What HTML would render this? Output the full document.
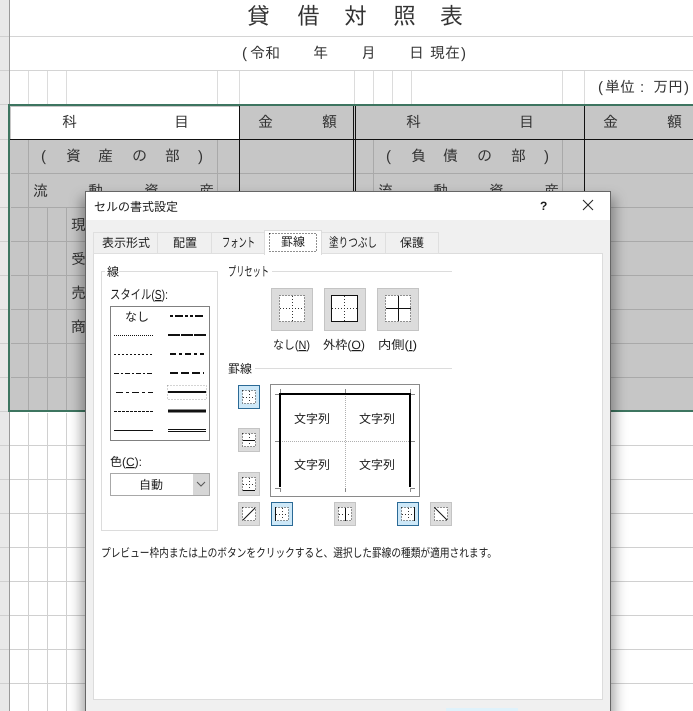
<!DOCTYPE html>
<html lang="ja"><head><meta charset="utf-8"><style>
html,body{margin:0;padding:0;background:#fff;width:693px;height:711px;overflow:hidden}
svg{display:block}
.s{font-family:"Liberation Sans","IPAGothic","Noto Sans CJK JP",sans-serif;fill:#333}
.d{font-family:"Liberation Sans","Noto Sans CJK JP",sans-serif;fill:#1c1c1c;font-weight:400}
</style></head><body>
<svg width="693" height="711" viewBox="0 0 693 711" xmlns="http://www.w3.org/2000/svg" shape-rendering="crispEdges">
<defs>
<filter id="blur" x="-10%" y="-10%" width="120%" height="120%"><feGaussianBlur stdDeviation="6"/></filter>
</defs>
<rect x="0" y="0" width="9" height="711" fill="#e8e8e8"/>
<g stroke="#cfcfcf"><path d="M0 36.500H9M0 70.500H9M0 104.500H9M0 139.500H9M0 173.500H9M0 207.500H9M0 241.500H9M0 275.500H9M0 309.500H9M0 343.500H9M0 377.500H9M0 411.500H9M0 445.500H9M0 479.500H9M0 513.500H9M0 547.500H9M0 581.500H9M0 615.500H9M0 649.500H9M0 683.500H9"/></g>
<rect x="9" y="0" width="1" height="711" fill="#999"/>
<!-- upper grid -->
<path d="M10 36.500H693M10 70.500H693" stroke="#d4d4d4"/>
<path d="M28.500 71V105M47.500 71V105M66.500 71V105M217.500 71V105M239.500 71V105M354.500 71V105M373.500 71V105M392.500 71V105M411.500 71V105M562.500 71V105M584.500 71V105" stroke="#dcdcdc"/>
<!-- selected gray -->
<rect x="10" y="106" width="683" height="305" fill="#c6c6c6"/>
<rect x="11" y="107" width="228" height="32" fill="#fff"/>
<path d="M11 173.500H693M11 207.500H693M11 241.500H693M11 275.500H693M11 309.500H693M11 343.500H693M11 377.500H693" stroke="#a9a9a9"/>
<path d="M28.500 140V411M47.500 207V411M66.500 207V411M217.500 140V207M373.500 140V207M562.500 140V207M392.500 207V411M411.500 207V411" stroke="#a9a9a9"/>
<path d="M10 139.500H693M239.500 106V208M353.500 106V208M355.500 106V208M584.500 106V208" stroke="#111"/>
<!-- lower grid -->
<path d="M10 445.500H693M10 479.500H693M10 513.500H693M10 547.500H693M10 581.500H693M10 615.500H693M10 649.500H693M10 683.500H693" stroke="#d0d0d0"/>
<path d="M28.500 413V711M47.500 413V711M66.500 413V711" stroke="#d0d0d0"/>
<!-- green border -->
<rect x="9" y="105" width="700" height="306" fill="none" stroke="#3d7560" stroke-width="2"/>
<!-- sheet text -->
<g class="s" text-rendering="geometricPrecision">
<text x="247" y="24" font-size="23">貸</text><text x="297" y="24" font-size="23">借</text><text x="344" y="24" font-size="23">対</text><text x="393" y="24" font-size="23">照</text><text x="440" y="24" font-size="23">表</text>
<g font-size="15"><text x="242" y="58">(</text><text x="250" y="58">令</text><text x="265" y="58">和</text><text x="313" y="58">年</text><text x="361" y="58">月</text><text x="409" y="58">日</text><text x="430" y="58">現</text><text x="445" y="58">在</text><text x="461" y="58">)</text>
<text x="598" y="92">(</text><text x="605" y="92">単</text><text x="620" y="92">位</text><text x="640" y="92">:</text><text x="653" y="92">万</text><text x="668" y="92">円</text><text x="684" y="92">)</text>
<text x="62" y="127">科</text><text x="174" y="127">目</text><text x="258" y="127">金</text><text x="322" y="127">額</text><text x="406" y="127">科</text><text x="519" y="127">目</text><text x="603" y="127">金</text><text x="667" y="127">額</text>
<text x="41" y="161">(</text><text x="66" y="161">資</text><text x="98" y="161">産</text><text x="132" y="161">の</text><text x="165" y="161">部</text><text x="198" y="161">)</text>
<text x="386" y="161">(</text><text x="411" y="161">負</text><text x="443" y="161">債</text><text x="477" y="161">の</text><text x="511" y="161">部</text><text x="544" y="161">)</text>
<text x="33" y="196">流</text><text x="88" y="196">動</text><text x="144" y="196">資</text><text x="199" y="196">産</text>
<text x="378" y="196">流</text><text x="433" y="196">動</text><text x="489" y="196">資</text><text x="544" y="196">産</text>
<text x="71" y="230">現</text><text x="71" y="264">受</text><text x="71" y="298">売</text><text x="71" y="332">商</text></g>
</g>
<!-- dialog shadow -->
<rect x="81" y="197" width="534" height="530" fill="#000" fill-opacity=".34" filter="url(#blur)" shape-rendering="auto"/>
<!-- dialog -->
<rect x="85.500" y="191.500" width="525" height="530" fill="#f0f0f0" stroke="#666"/>
<rect x="86" y="192" width="524" height="28" fill="#fff"/>
<rect x="93.500" y="253.500" width="509" height="446" fill="#fff" stroke="#dcdcdc"/>
<!-- tabs -->
<g fill="#f0f0f0" stroke="#dfdfdf">
<rect x="93.500" y="232.500" width="64" height="21"/><rect x="157.500" y="232.500" width="54" height="21"/><rect x="211.500" y="232.500" width="53" height="21"/><rect x="321.500" y="232.500" width="64" height="21"/><rect x="385.500" y="232.500" width="53" height="21"/>
</g>
<rect x="264.500" y="230.500" width="57" height="24" fill="#fff" stroke="#dcdcdc"/><rect x="265" y="250" width="56" height="5" fill="#fff"/>
<rect x="269.500" y="233.500" width="47" height="18" fill="none" stroke="#222" stroke-dasharray="1 2"/>
<!-- close X -->
<path d="M583 200L593 210M593 200L583 210" stroke="#222" fill="none" shape-rendering="auto"/>
<!-- groupboxes -->
<path d="M119 271.500H217.500V530.500H101.500V271.500H105" fill="none" stroke="#dcdcdc"/>
<path d="M272 271.500H452M255 368.500H452" stroke="#dcdcdc"/>
<!-- style list -->
<rect x="110.500" y="306.500" width="99" height="134" fill="#fff" stroke="#808080"/>
<g stroke="#111" fill="none">
<path d="M114 335.500H153" stroke-dasharray="1 1"/>
<path d="M114 354.500H153" stroke-dasharray="2 2"/>
<path d="M114 373.500H153" stroke-dasharray="5 2 2 2"/>
<path d="M116 392.500H153" stroke-dasharray="7 3 3 3"/>
<path d="M114 411.500H153" stroke-dasharray="3 1"/>
<path d="M114 430.500H153"/>
<path d="M170 316H204" stroke-width="2" stroke-dasharray="3 2 8 2 3 2"/>
<path d="M168 335H206" stroke-width="2" stroke-dasharray="12 1"/>
<path d="M170 354H204" stroke-width="2" stroke-dasharray="6 3 3 3"/>
<path d="M170 373H204" stroke-width="2" stroke-dasharray="8 3"/>
<path d="M168 392H206" stroke-width="2"/>
<path d="M168 411H206" stroke-width="3"/>
<path d="M168 429.500H206M168 431.500H206"/>
<rect x="167.500" y="385.500" width="39" height="14" stroke="#aaa" stroke-dasharray="1 2"/>
</g>
<!-- color combo -->
<rect x="110.500" y="473.500" width="99" height="22" fill="#fff" stroke="#a8a8a8"/>
<rect x="193" y="474" width="16" height="21" fill="#d6d6d6"/>
<path d="M197 482L201 486L205 482" fill="none" stroke="#555" shape-rendering="auto"/>
<!-- preset buttons -->
<g fill="#dcdcdc" stroke="#c4c4c4">
<rect x="271.500" y="288.500" width="41" height="42"/><rect x="324.500" y="288.500" width="41" height="42"/><rect x="377.500" y="288.500" width="41" height="42"/>
</g>
<g fill="#fff" stroke="#333" stroke-dasharray="1 2">
<rect x="279.500" y="295.500" width="25" height="26"/><path d="M280 308.500H304M292.500 296V321"/>
<rect x="385.500" y="295.500" width="25" height="26"/>
</g>
<rect x="331.500" y="295.500" width="26" height="26" fill="#fff" stroke="#111"/>
<path d="M332 308.500H357M344.500 296V321" stroke="#333" stroke-dasharray="1 2"/>
<path d="M386 308.500H411M398.500 296V321" stroke="#111"/>
<!-- preview -->
<rect x="270.500" y="384.500" width="149" height="112" fill="#fff" stroke="#8a8a8a"/>
<path d="M345.500 390V490M276 441.500H414" stroke="#b0b0b0" stroke-dasharray="1 1"/>
<path d="M275 394.500H280M410 394.500H415M275 441.500H280M410 441.500H415M275 488.500H280M410 488.500H415M280.500 389V394M345.500 389V394M410.500 389V394M280.500 488V492M345.500 488V492M410.500 488V492" stroke="#888"/>
<path d="M279 394H411M280 393V487M410 393V487" stroke="#000" stroke-width="2" fill="none"/>
<!-- border buttons -->
<g fill="#dcdcdc" stroke="#c4c4c4">
<rect x="238.500" y="428.500" width="21" height="23"/><rect x="238.500" y="472.500" width="21" height="23"/><rect x="238.500" y="502.500" width="21" height="23"/><rect x="334.500" y="502.500" width="21" height="23"/><rect x="430.500" y="502.500" width="21" height="23"/>
</g>
<g fill="#cde8f8" stroke="#2b6a96">
<rect x="238.500" y="385.500" width="21" height="23"/><rect x="271.500" y="502.500" width="21" height="23"/><rect x="397.500" y="502.500" width="21" height="23"/>
</g>
<g fill="#fff" stroke="#333" stroke-dasharray="1 2">
<rect x="242.500" y="390.500" width="13" height="13"/><rect x="242.500" y="433.500" width="13" height="13"/><rect x="242.500" y="477.500" width="13" height="13"/><rect x="242.500" y="507.500" width="13" height="13"/>
<rect x="275.500" y="507.500" width="13" height="13"/><rect x="338.500" y="507.500" width="13" height="13"/><rect x="401.500" y="507.500" width="13" height="13"/><rect x="434.500" y="507.500" width="13" height="13"/>
<path d="M243 397.500H255M249.500 391V403M249.500 434V446M243 484.500H255M249.500 478V490M276 514.500H288M282.500 508V520M339 514.500H351M402 514.500H414M408.500 508V520"/>
</g>
<path d="M243 440.500H255M243 490.500H255M243 520L255 508M275.500 507V521M345.500 508V521M414.500 507V521M435 508L447 520" stroke="#111" fill="none" shape-rendering="auto"/>
<!-- bottom button hint -->
<rect x="446" y="708" width="72" height="3" fill="#dff2fb"/>
<!-- dialog text on top -->
<g class="d" text-rendering="geometricPrecision">
<text x="94" y="211" font-size="12">セルの書式設定</text>
<text x="540" y="210" font-size="12" style="font-weight:700">?</text>
<g font-size="12">
<text x="102" y="247">表示形式</text><text x="173" y="247">配置</text><text x="222" y="247" font-size="13" textLength="33" lengthAdjust="spacingAndGlyphs">フォント</text><text x="281" y="246">罫線</text><text x="329" y="247" font-size="13" textLength="48" lengthAdjust="spacingAndGlyphs">塗りつぶし</text><text x="400" y="247">保護</text>
<text x="107" y="276">線</text><text x="228" y="276" font-size="13" textLength="41" lengthAdjust="spacingAndGlyphs">プリセット</text><text x="228" y="373">罫線</text>
<text x="110" y="299" font-size="13" textLength="58" lengthAdjust="spacingAndGlyphs">スタイル(<tspan text-decoration="underline">S</tspan>):</text>
<text x="125" y="321">なし</text>
<text x="110" y="466">色(<tspan text-decoration="underline">C</tspan>):</text>
<text x="139" y="489">自動</text>
<text x="273" y="349" textLength="37" lengthAdjust="spacingAndGlyphs">なし(<tspan text-decoration="underline">N</tspan>)</text><text x="323" y="349" textLength="42" lengthAdjust="spacingAndGlyphs">外枠(<tspan text-decoration="underline">O</tspan>)</text><text x="378" y="349" textLength="39" lengthAdjust="spacingAndGlyphs">内側(<tspan text-decoration="underline">I</tspan>)</text>
<text x="294" y="423">文字列</text><text x="359" y="423">文字列</text><text x="294" y="469">文字列</text><text x="359" y="469">文字列</text>
</g>
<text x="101" y="557" font-size="12" textLength="396" lengthAdjust="spacingAndGlyphs">プレビュー枠内または上のボタンをクリックすると、選択した罫線の種類が適用されます。</text>
</g>
</svg>
</body></html>
